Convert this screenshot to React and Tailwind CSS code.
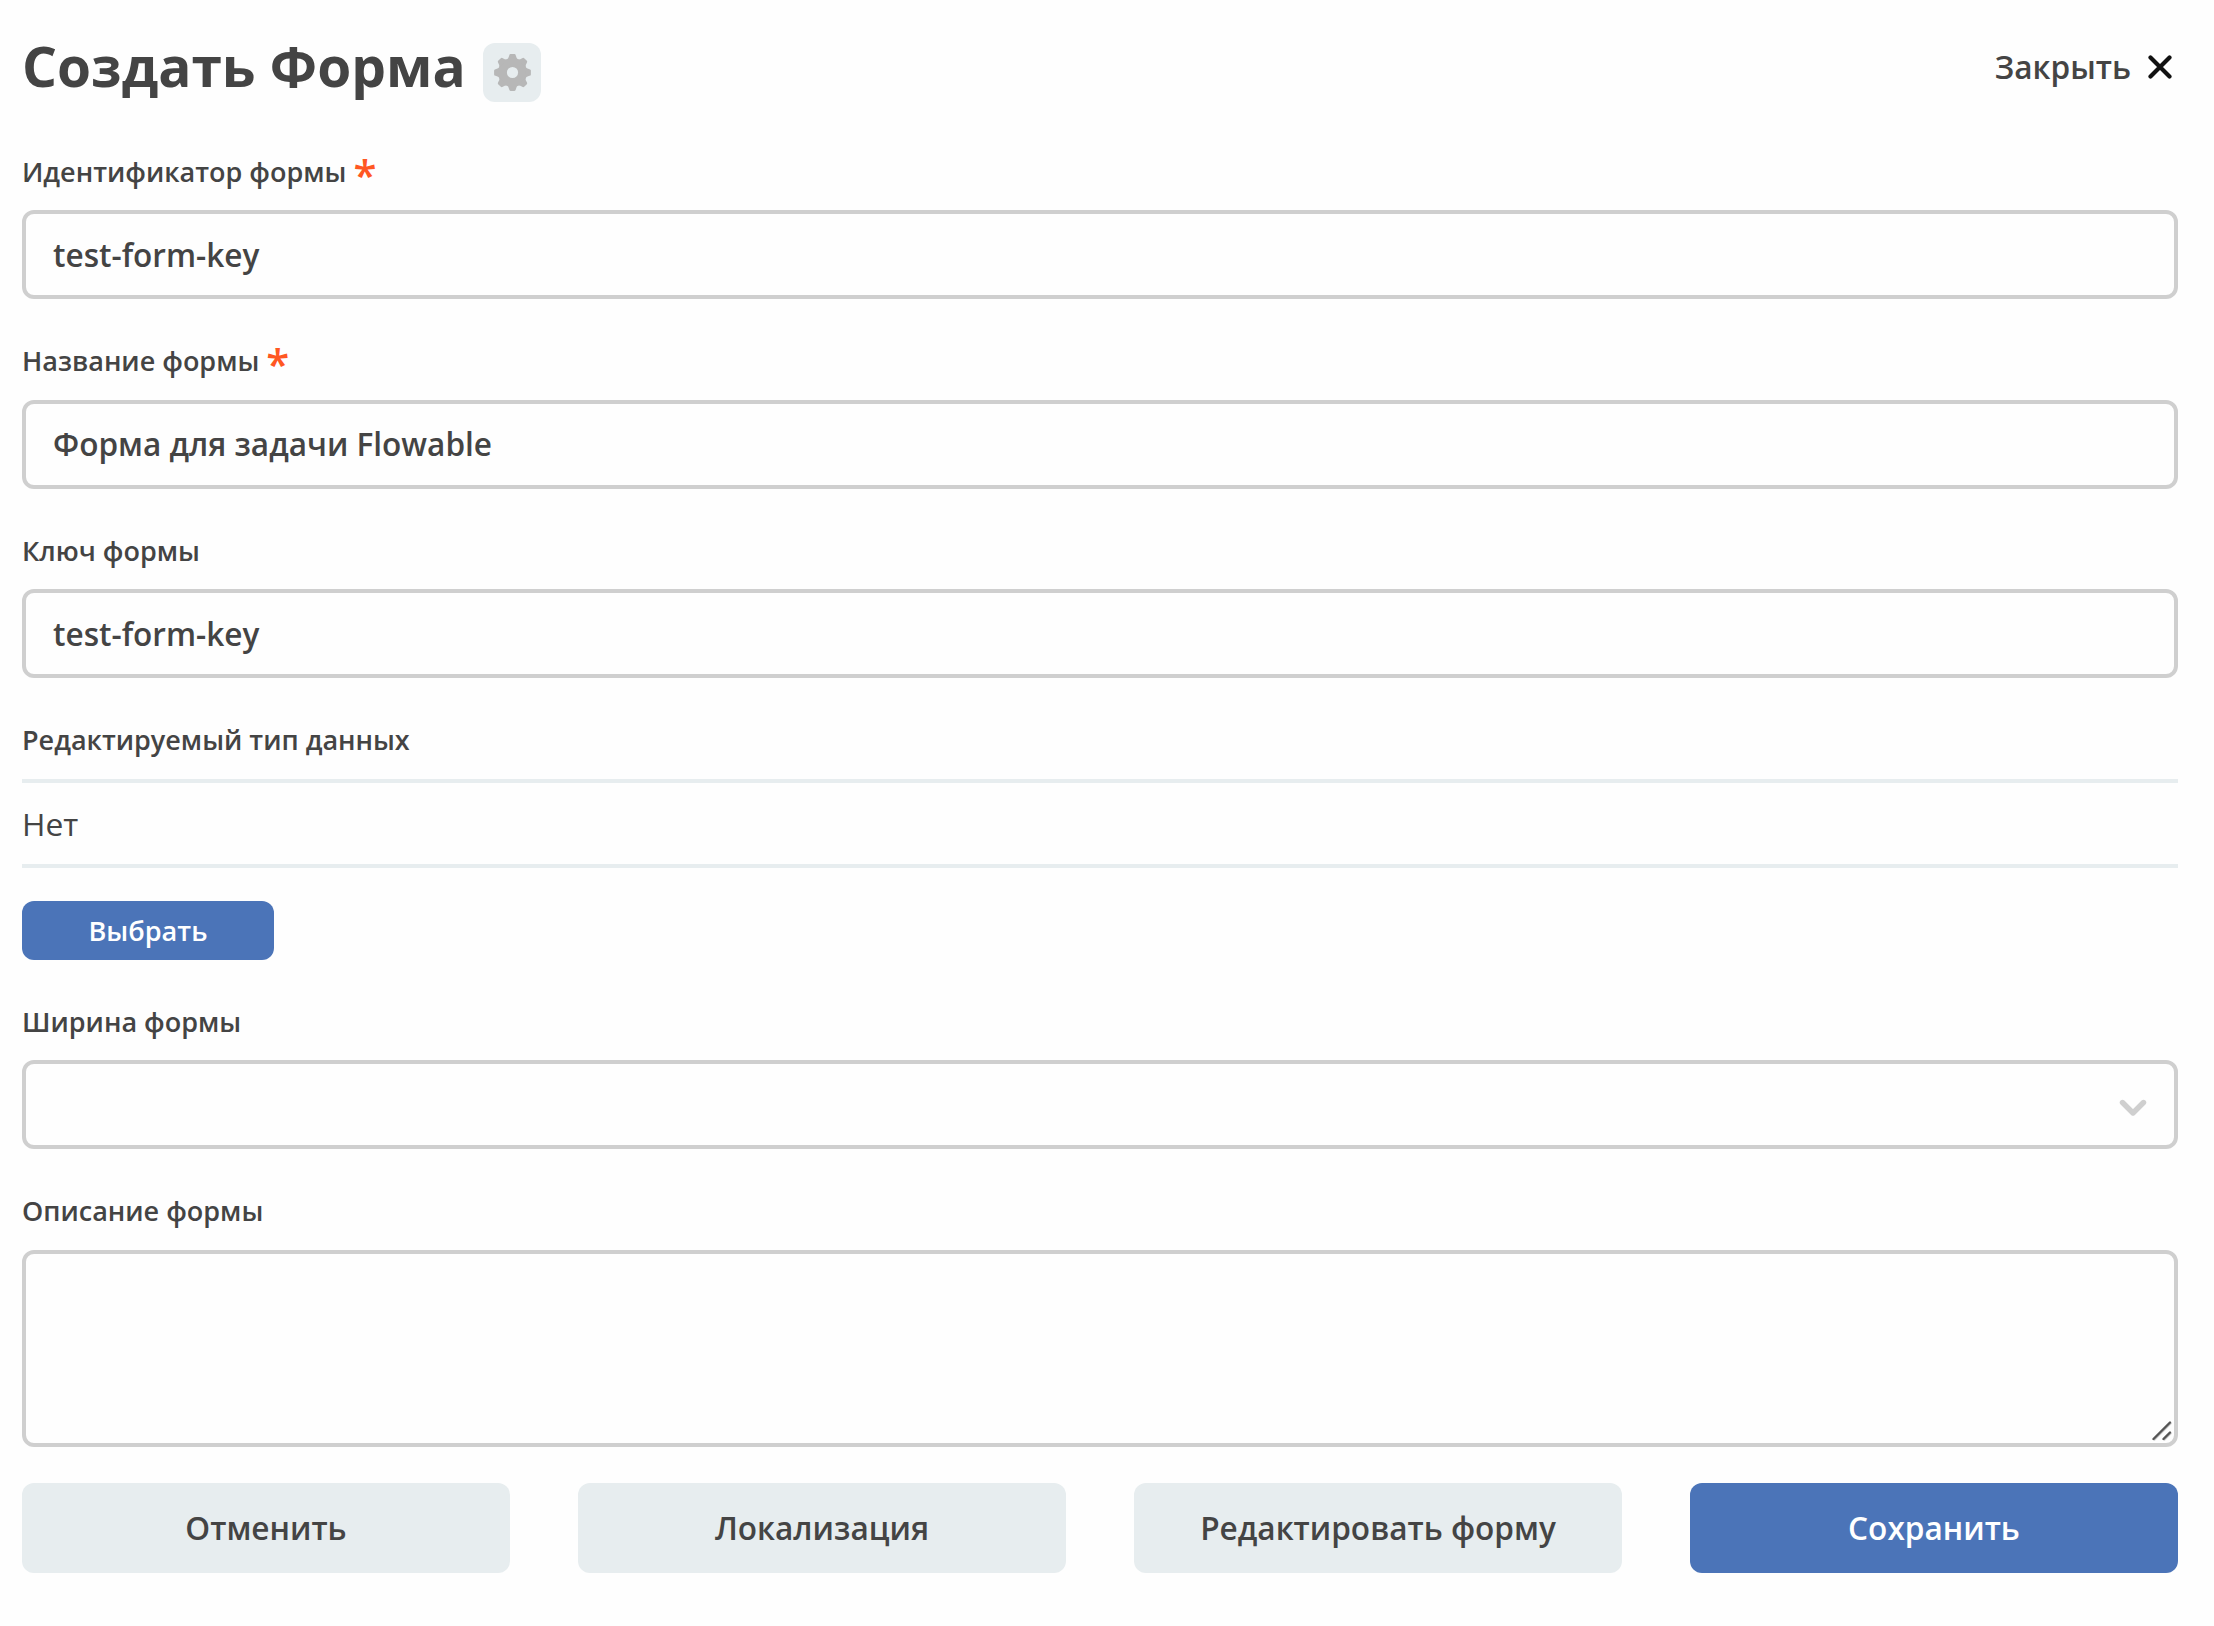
const GEAR_TEETH = [0, 45, 90, 135, 180, 225, 270, 315];

function GearIcon() {
  return (
    <svg viewBox="-18.5 -18.5 37 37" className="h-[37px] w-[37px]" fill="#b7b7b7">
      <path
        fillRule="evenodd"
        d="M0-14.2A14.2 14.2 0 1 1 0 14.2A14.2 14.2 0 1 1 0-14.2ZM0-5.6A5.6 5.6 0 1 0 0 5.6A5.6 5.6 0 1 0 0-5.6Z"
      />
      {GEAR_TEETH.map((angle) => (
        <path key={angle} transform={`rotate(${angle})`} d="M-6-12.6Q-3.8-14-3.3-17Q-3-18.4-1.9-18.4H1.9Q3-18.4 3.3-17Q3.8-14 6-12.6Z" />
      ))}
    </svg>
  );
}

function Label({ children, required }) {
  return (
    <div className="flex h-10 items-start text-[27px] leading-[41px] font-semibold">
      <span>{children}</span>
      {required && <span className="ml-[7px] pt-[3px] text-[42px] leading-10 text-[#ff5722]">*</span>}
    </div>
  );
}

function TextField({ label, value, required }) {
  return (
    <div className="mb-[41px]">
      <Label required={required}>{label}</Label>
      <div className="mt-[19.5px] flex h-[89px] items-center rounded-xl border-4 border-[#cfcfcf] px-[27px] text-[31.55px] font-semibold">
        {value}
      </div>
    </div>
  );
}

function ActionButton({ children, primary }) {
  return (
    <button
      className={
        primary
          ? "h-[90px] rounded-xl bg-[#4b74b8] text-[31.6px] font-semibold text-white"
          : "h-[90px] rounded-xl bg-[#e7edef] text-[31.6px] font-semibold"
      }
    >
      {children}
    </button>
  );
}

export default function App() {
  return (
    <div className="min-h-[1626px] bg-[#fefefe] pr-9 pl-[22px] font-['Open_Sans',sans-serif] text-[#444444]">
      <header className="flex h-[150.5px] items-start justify-between">
        <div className="flex items-start pt-[26px]">
          <h1 className="w-[442px] text-[55px] leading-20 font-bold whitespace-nowrap">Создать Форма</h1>
          <button className="mt-[17px] ml-[19px] flex h-[59px] w-[58px] items-center justify-center rounded-xl bg-[#e7edef]">
            <GearIcon />
          </button>
        </div>
        <button className="mt-[43px] mr-[6px] flex h-12 items-center text-[31.6px] font-semibold">
          Закрыть
          <svg viewBox="0 0 24 24" className="ml-[17px] h-6 w-6" fill="none" stroke="#111111" strokeWidth="4.2" strokeLinecap="round">
            <path d="M2.5 2.5L21.5 21.5M21.5 2.5L2.5 21.5" />
          </svg>
        </button>
      </header>

      <TextField label="Идентификатор формы" value="test-form-key" required />
      <TextField label="Название формы" value="Форма для задачи Flowable" required />
      <TextField label="Ключ формы" value="test-form-key" />

      <Label>Редактируемый тип данных</Label>
      <div className="mt-5 flex h-[89px] items-center border-y-4 border-[#e7edef] pt-px text-[31.8px] font-normal">Нет</div>
      <button className="mt-[33px] flex h-[59px] w-[252px] items-center justify-center rounded-xl bg-[#4b74b8] pt-0.5 text-[27.1px] font-semibold text-white">
        Выбрать
      </button>

      <div className="mt-[41px]">
        <Label>Ширина формы</Label>
        <div className="mt-[19px] flex h-[89px] items-center justify-end rounded-xl border-4 border-[#cfcfcf] pr-[27px]">
          <svg viewBox="0 0 28 18" className="mt-1.5 h-[18px] w-7" fill="none" stroke="#cfcfcf" strokeWidth="5.4" strokeLinecap="round" strokeLinejoin="round">
            <path d="M3.5 3.5L14 14L24.5 3.5" />
          </svg>
        </div>
      </div>

      <div className="mt-[41px]">
        <Label>Описание формы</Label>
        <div className="mt-5 flex h-[197px] items-end justify-end rounded-xl border-4 border-[#cfcfcf] p-0.5">
          <svg viewBox="0 0 20 20" className="h-5 w-5" fill="none" strokeLinecap="round">
            <path d="M2.5 19L19 2.5M12.5 19L19 12.5" stroke="#cfcfcf" strokeWidth="1.6" />
            <path d="M1.5 18L18 1.5M11.5 18L18 11.5" stroke="#555555" strokeWidth="2.4" />
          </svg>
        </div>
      </div>

      <div className="mt-9 grid grid-cols-4 gap-[68px]">
        <ActionButton>Отменить</ActionButton>
        <ActionButton>Локализация</ActionButton>
        <ActionButton>Редактировать форму</ActionButton>
        <ActionButton primary>Сохранить</ActionButton>
      </div>
    </div>
  );
}
